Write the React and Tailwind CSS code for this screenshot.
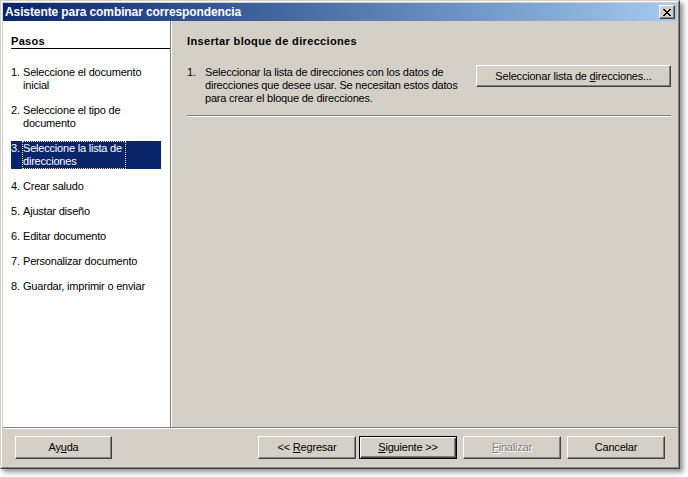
import React from "react";

const steps = [
  { n: "1.", lines: ["Seleccione el documento", "inicial"] },
  { n: "2.", lines: ["Seleccione el tipo de", "documento"] },
  { n: "3.", lines: ["Seleccione la lista de", "direcciones"], active: true },
  { n: "4.", lines: ["Crear saludo"] },
  { n: "5.", lines: ["Ajustar diseño"] },
  { n: "6.", lines: ["Editar documento"] },
  { n: "7.", lines: ["Personalizar documento"] },
  { n: "8.", lines: ["Guardar, imprimir o enviar"] },
];

function Btn({ children, w = "w-[98px]", h = "h-[23px]", isDefault, disabled }) {
  const edge = isDefault
    ? "border border-black shadow-[inset_1px_1px_#fff,inset_-1px_-1px_#404040,inset_-2px_-2px_#808080]"
    : "border border-t-white border-l-white border-r-[#404040] border-b-[#404040] shadow-[inset_-1px_-1px_#808080]";
  const txt = disabled
    ? "text-[#808080] [text-shadow:1px_1px_0_#fff]"
    : "text-black";
  return (
    <div
      className={`${w} ${h} flex items-center justify-center bg-[#d4d0c8] ${edge} ${txt}`}
    >
      <span className="whitespace-pre">{children}</span>
    </div>
  );
}

function CloseGlyph() {
  // classic 8x7 pixel X
  const px = [
    [0, 0], [1, 0], [6, 0], [7, 0],
    [1, 1], [2, 1], [5, 1], [6, 1],
    [2, 2], [3, 2], [4, 2], [5, 2],
    [3, 3], [4, 3],
    [2, 4], [3, 4], [4, 4], [5, 4],
    [1, 5], [2, 5], [5, 5], [6, 5],
    [0, 6], [1, 6], [6, 6], [7, 6],
  ];
  return (
    <svg width="8" height="7" viewBox="0 0 8 7" shapeRendering="crispEdges">
      {px.map(([x, y]) => (
        <rect key={x + "-" + y} x={x} y={y} width="1" height="1" fill="#000" />
      ))}
    </svg>
  );
}

export default function App() {
  return (
    <div className="w-[688px] h-[477px] bg-white font-['Liberation_Sans',Arial,sans-serif] text-[11px] leading-[13px] tracking-[-0.2px] text-black">
      {/* window */}
      <div className="w-[680px] h-[469px] flex flex-col border border-t-[#d4d0c8] border-l-[#d4d0c8] border-r-[#404040] border-b-[#404040] bg-[#d4d0c8] shadow-[3px_3px_5px_rgba(0,0,0,0.45)]">
        <div className="flex-1 flex flex-col border border-t-white border-l-white border-r-[#808080] border-b-[#808080] p-[1px]">
          {/* title bar */}
          <div className="h-[18px] flex items-center justify-between bg-gradient-to-r from-[#0a246a] to-[#a6caf0] pl-[2px] pr-[2px]">
            <span className="text-white font-bold text-[12px] tracking-[-0.1px]">
              Asistente para combinar correspondencia
            </span>
            <div className="w-[16px] h-[14px] flex items-center justify-center bg-[#d4d0c8] border border-t-white border-l-white border-r-[#404040] border-b-[#404040] shadow-[inset_-1px_-1px_#808080]">
              <CloseGlyph />
            </div>
          </div>

          {/* body */}
          <div className="flex-1 flex">
            {/* steps panel */}
            <div className="w-[167px] bg-white pl-[8px] pt-[14px]">
              <div className="border-b border-black font-bold tracking-[0.3px]">
                Pasos
              </div>
              <div className="mt-[11px]">
                {steps.map((s) => (
                  <div key={s.n} className="py-[5px]">
                    <div
                      className={
                        s.active
                          ? "w-[150px] flex bg-[#0a246a] text-white"
                          : "w-[150px] flex"
                      }
                    >
                      <span className="w-[11px] pt-[1px] shrink-0">{s.n}</span>
                      <span
                        className={
                          s.active
                            ? "border border-dotted border-[#e8e4a8] pr-[3px]"
                            : "border border-transparent pr-[3px]"
                        }
                      >
                        {s.lines.map((l, i) => (
                          <div key={i}>{l}</div>
                        ))}
                      </span>
                    </div>
                  </div>
                ))}
              </div>
            </div>
            <div className="w-[1px] bg-[#808080]" />
            <div className="w-[1px] bg-white" />

            {/* content */}
            <div className="flex-1 pl-[15px] pr-[6px] pt-[14px]">
              <div className="font-bold tracking-[0.35px]">
                Insertar bloque de direcciones
              </div>
              <div className="mt-[18px] flex items-start justify-between">
                <div className="flex">
                  <span className="w-[18px] shrink-0">1.</span>
                  <div>
                    <div>Seleccionar la lista de direcciones con los datos de</div>
                    <div>direcciones que desee usar. Se necesitan estos datos</div>
                    <div>para crear el bloque de direcciones.</div>
                  </div>
                </div>
                <div className="-mt-[1px]">
                  <Btn w="w-[195px]" h="h-[22px]">
                    {"Seleccionar lista de "}
                    <span className="underline">d</span>
                    {"irecciones..."}
                  </Btn>
                </div>
              </div>
              <div className="mt-[10px] border-t border-t-[#808080] border-b border-b-white" />
            </div>
          </div>

          {/* separator */}
          <div className="border-t border-t-[#808080] border-b border-b-white" />

          {/* buttons */}
          <div className="h-[37px] flex items-center px-[12px]">
            <Btn w="w-[97px]">
              Ay<span className="underline">u</span>da
            </Btn>
            <div className="flex-1" />
            <Btn>
              {"<< "}
              <span className="underline">R</span>
              {"egresar"}
            </Btn>
            <div className="w-[3px]" />
            <Btn isDefault>
              <span className="underline">S</span>
              {"iguiente >>"}
            </Btn>
            <div className="w-[6px]" />
            <Btn disabled>
              <span className="underline">F</span>inalizar
            </Btn>
            <div className="w-[6px]" />
            <Btn>Cancelar</Btn>
          </div>
        </div>
      </div>
    </div>
  );
}
